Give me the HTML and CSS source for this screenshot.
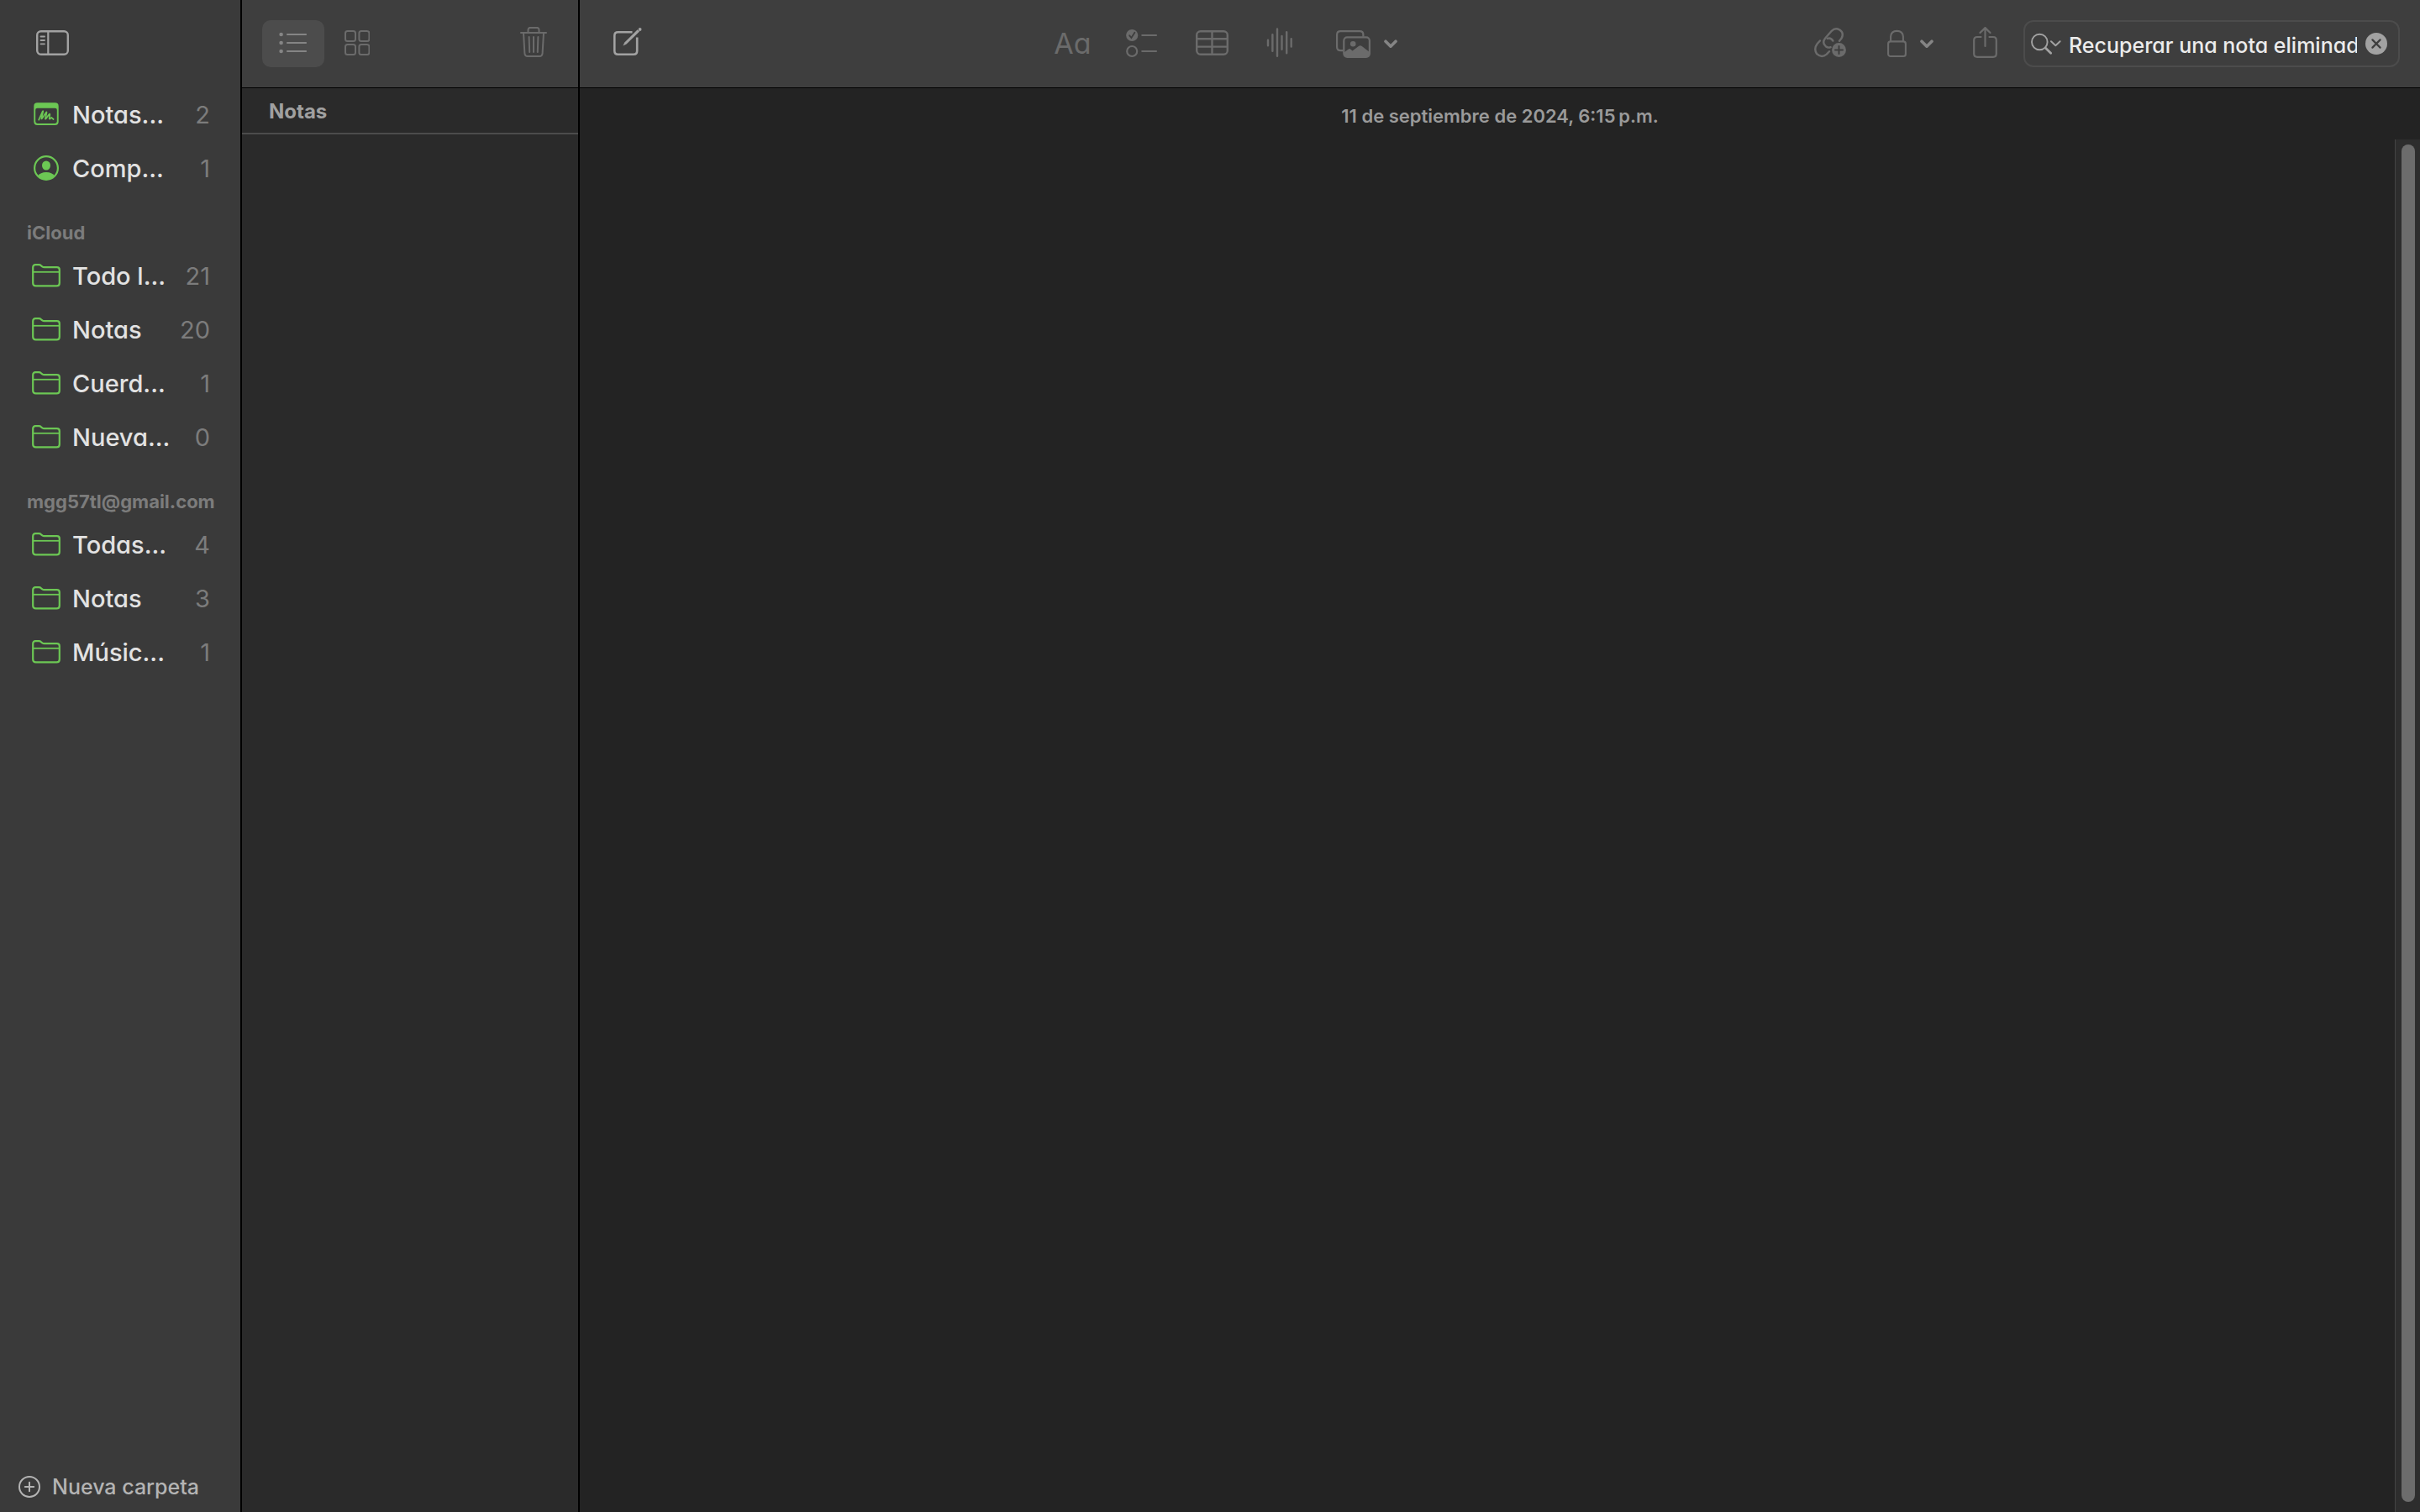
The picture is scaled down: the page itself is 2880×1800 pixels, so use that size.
FILE: index.html
```html
<!DOCTYPE html>
<html lang="es">
<head>
<meta charset="utf-8">
<meta name="viewport" content="width=device-width, initial-scale=1">
<title>Notas</title>
<link rel="stylesheet" href="styles.css">
</head>
<body>
<svg class="defs" aria-hidden="true">
  <symbol id="folder" viewBox="0 0 34 28">
    <path d="M1.2 23V4.2Q1.2 1.2 4.2 1.2H8.2Q9.8 1.2 11 2.3L12.2 3.3Q13.2 4.2 14.8 4.2H29.8Q32.8 4.2 32.8 7.2V23Q32.8 26.4 29.4 26.4H4.6Q1.2 26.4 1.2 23Z" fill="none" stroke="currentColor" stroke-width="2.2"/>
    <path d="M1.2 9.8H32.8" stroke="currentColor" stroke-width="1.8"/>
  </symbol>
  <symbol id="chevron" viewBox="0 0 16 40">
    <path d="M2 17.2L8 23.2L14 17.2" fill="none" stroke="currentColor" stroke-width="3.6" stroke-linecap="round" stroke-linejoin="round"/>
  </symbol>
</svg>
<div class="app">
  <aside class="sidebar">
    <div class="sidebar-top">
      <button class="tool bright" type="button" aria-label="Ocultar carpetas">
        <svg width="39" height="40" viewBox="0 0 39 40" fill="none" stroke="currentColor"><rect x="1.2" y="5.2" width="36.6" height="27.6" rx="4.5" stroke-width="2.4"/><path d="M14.3 5V33" stroke-width="2.2"/><path d="M5.5 11.5H10M5.5 16H10M5.5 20.3H10" stroke-width="1.8" stroke-linecap="round"/></svg>
      </button>
    </div>
    <nav class="folders">
      <a class="row" href="#rapidas"><span class="icon"><svg width="30" height="28" viewBox="0 0 30 28"><path fill="currentColor" fill-rule="evenodd" d="M4.5 0.2H25.5Q29.7 0.2 29.7 4.4V22.8Q29.7 27 25.5 27H4.5Q0.3 27 0.3 22.8V4.4Q0.3 .2 4.5 .2ZM4.4 6.8Q2.2 6.8 2.2 8.8V22.6Q2.2 25 4.6 25H25.4Q27.8 25 27.8 22.6V8.8Q27.8 6.8 25.6 6.8Z"/><path d="M6.2 20.6L10.6 10.8Q11.6 9.2 11 11.8L9.4 18.6Q9.2 20.4 10.4 18.6L14.6 12.2Q16 10.4 15.4 12.6L14 18.8Q13.8 20.6 15.1 18.8L18.3 14.3Q19.7 12.8 19.3 14.8L18.7 18.6Q18.8 20.4 20.1 19L21.2 17.9L23.6 20" fill="none" stroke="currentColor" stroke-width="1.7" stroke-linecap="round" stroke-linejoin="round"/></svg></span><span class="name">Notas...</span><span class="count">2</span></a>
      <a class="row" href="#compartidas"><span class="icon"><svg width="30" height="30" viewBox="0 0 30 30"><circle cx="15" cy="15" r="13.9" fill="none" stroke="currentColor" stroke-width="2.2"/><ellipse cx="15" cy="12" rx="5" ry="5.6" fill="currentColor"/><path d="M5 24.5Q8 20 15 20T25 24.5Q21 29 15 29T5 24.5Z" fill="currentColor"/></svg></span><span class="name">Comp...</span><span class="count">1</span></a>
      <h2 class="section">iCloud</h2>
      <a class="row" href="#todo"><span class="icon"><svg width="34" height="28"><use href="#folder"/></svg></span><span class="name">Todo l...</span><span class="count">21</span></a>
      <a class="row" href="#notas"><span class="icon"><svg width="34" height="28"><use href="#folder"/></svg></span><span class="name">Notas</span><span class="count">20</span></a>
      <a class="row" href="#cuerdas"><span class="icon"><svg width="34" height="28"><use href="#folder"/></svg></span><span class="name">Cuerd...</span><span class="count">1</span></a>
      <a class="row" href="#nueva"><span class="icon"><svg width="34" height="28"><use href="#folder"/></svg></span><span class="name">Nueva...</span><span class="count">0</span></a>
      <h2 class="section">mgg57tl@gmail.com</h2>
      <a class="row" href="#todas"><span class="icon"><svg width="34" height="28"><use href="#folder"/></svg></span><span class="name">Todas...</span><span class="count">4</span></a>
      <a class="row" href="#notas-gmail"><span class="icon"><svg width="34" height="28"><use href="#folder"/></svg></span><span class="name">Notas</span><span class="count">3</span></a>
      <a class="row" href="#musica"><span class="icon"><svg width="34" height="28"><use href="#folder"/></svg></span><span class="name">Músic...</span><span class="count">1</span></a>
    </nav>
    <button class="new-folder" type="button">
      <svg width="26" height="26" viewBox="0 0 26 26" fill="none" stroke="currentColor" stroke-width="2" stroke-linecap="round"><circle cx="13" cy="13" r="12"/><path d="M13 7.8V18.2M7.8 13H18.2"/></svg>
      Nueva carpeta
    </button>
  </aside>

  <section class="list">
    <header class="toolbar list-bar">
      <button class="tool view selected" type="button" aria-label="Lista">
        <svg width="34" height="40" viewBox="0 0 34 40" fill="none" stroke="currentColor" stroke-width="2.2" stroke-linecap="round"><path d="M10 9H32M10 19H32M10 29H32"/><g fill="currentColor" stroke="none"><circle cx="2.6" cy="9" r="2.3"/><circle cx="2.6" cy="19" r="2.3"/><circle cx="2.6" cy="29" r="2.3"/></g></svg>
      </button>
      <button class="tool grid" type="button" aria-label="Galería">
        <svg width="30" height="40" viewBox="0 0 30 40" fill="none" stroke="currentColor" stroke-width="2"><rect x="1" y="5" width="12" height="12" rx="2.5"/><rect x="17.4" y="5" width="12" height="12" rx="2.5"/><rect x="1" y="21" width="12" height="12" rx="2.5"/><rect x="17.4" y="21" width="12" height="12" rx="2.5"/></svg>
      </button>
      <button class="tool trash" type="button" aria-label="Eliminar">
        <svg width="32" height="40" viewBox="0 0 32 40" fill="none" stroke="currentColor" stroke-width="2" stroke-linecap="round"><path d="M1 7H31M9.5 7V3.5Q9.5 0.9 12 .9H20Q22.5 .9 22.5 3.5V7M4 7L5.4 31.5Q5.7 35 8.8 35H23.2Q26.3 35 26.6 31.5L28 7M10.6 12L11.2 30M16 12V30M21.4 12L20.8 30"/></svg>
      </button>
    </header>
    <h1 class="list-title">Notas</h1>
  </section>

  <main class="editor">
    <header class="toolbar editor-bar">
      <button class="tool bright" type="button" aria-label="Nueva nota">
        <svg width="34" height="40" viewBox="0 0 34 40" fill="none" stroke="currentColor"><path d="M22.5 6.2H5.5Q1.3 6.2 1.3 10.4V28.6Q1.3 32.8 5.5 32.8H24Q28.2 32.8 28.2 28.6V12.5" stroke-width="2.6"/><path d="M28.7 3.3L31 5.6L15.5 20.6L11.4 22.6L13.3 18.4Z" fill="currentColor" stroke="none"/><circle cx="31.6" cy="3" r="1.9" fill="currentColor" stroke="none"/></svg>
      </button>
      <div class="tools format">
        <button class="tool text" type="button" aria-label="Formato">Aa</button>
        <button class="tool" type="button" aria-label="Lista de verificación">
          <svg width="38" height="40" viewBox="0 0 38 40" fill="none" stroke="currentColor" stroke-width="2.2" stroke-linecap="round"><path d="M19.3 10H36M19.3 29H36"/><circle cx="7.2" cy="29" r="6"/><circle cx="7.2" cy="10" r="7.1" fill="currentColor" stroke="none"/><path class="cut" d="M4.2 10.3L6.4 12.9L10.4 6.8" stroke-width="1.8"/></svg>
        </button>
        <button class="tool" type="button" aria-label="Tabla">
          <svg width="39" height="40" viewBox="0 0 39 40" fill="none" stroke="currentColor" stroke-width="2.4"><rect x="1.2" y="5.2" width="36.6" height="27.6" rx="4.5"/><path d="M19.5 5V33M1 14.3H38M1 23.6H38"/></svg>
        </button>
        <button class="tool" type="button" aria-label="Audio">
          <svg width="32" height="40" viewBox="0 0 32 40" fill="none" stroke="currentColor" stroke-width="2.4" stroke-linecap="round"><path d="M2 15.8V22.2M7.4 9.2V28.8M13 2.5V34.8M18.5 11V26.8M24.2 6.3V31.2M29.7 14.2V23.6"/></svg>
        </button>
        <span class="pair media">
          <button class="tool" type="button" aria-label="Multimedia">
            <svg width="41" height="40" viewBox="0 0 41 40" fill="none" stroke="currentColor" stroke-width="2.2"><path d="M8.5 28.2H5.6Q1.1 28.2 1.1 24V9.2Q1.1 5.1 5.3 5.1H28.2Q32.4 5.1 32.4 9.2V11.8"/><rect x="9.3" y="12.4" width="30.6" height="23.4" rx="4"/><circle cx="20.2" cy="20.3" r="3.3" fill="currentColor" stroke="none"/><path d="M9.5 30.5L14.8 26.5Q16.2 25.5 17.5 26.7L19.5 28.6L27.2 22.8Q29 21.5 30.8 23L39.8 30V33Q39.8 36 36.5 36H13Q9.5 36 9.5 32.5Z" fill="currentColor" stroke="none"/></svg>
          </button>
          <button class="tool arrow" type="button" aria-label="Opciones multimedia"><svg width="16" height="40"><use href="#chevron"/></svg></button>
        </span>
      </div>
      <div class="tools actions">
        <button class="tool link" type="button" aria-label="Agregar enlace">
          <svg width="38" height="40" viewBox="0 0 38 40" fill="none" stroke="currentColor" stroke-width="2.4" stroke-linecap="round"><path d="M19.6 24.2Q16.6 25.4 13.8 23.2Q9 19 13 13.8L20.8 4.8Q25 .6 30.4 3.6Q36 7.6 32.4 13.8L30 16.8"/><path d="M15.8 13.8Q20 12.5 22.4 16.6"/><path d="M6.9 16.5L3.6 20.2Q-.9 26.2 3.2 32.2Q8.8 37.4 14.8 32.6L18 29.2"/><circle cx="29.5" cy="27.5" r="8.4" fill="currentColor" stroke="none"/><path class="cut" d="M29.5 23V32M25 27.5H34" stroke-width="2"/></svg>
        </button>
        <span class="pair">
          <button class="tool" type="button" aria-label="Bloquear">
            <svg width="23" height="40" viewBox="0 0 23 40" fill="none" stroke="currentColor" stroke-width="2.1"><rect x="1.1" y="17.4" width="20.8" height="17.6" rx="2.8"/><path d="M4.1 17V11.5Q4.5 4.9 11.5 4.9T18.9 11.5V17"/></svg>
          </button>
          <button class="tool arrow" type="button" aria-label="Opciones de bloqueo"><svg width="16" height="40"><use href="#chevron"/></svg></button>
        </span>
        <button class="tool" type="button" aria-label="Compartir">
          <svg width="29" height="40" viewBox="0 0 29 40" fill="none" stroke="currentColor" stroke-width="2.2" stroke-linecap="round" stroke-linejoin="round"><path d="M9.5 12H5Q1.2 12 1.2 15.8V32Q1.2 35.8 5 35.8H24Q27.8 35.8 27.8 32V15.8Q27.8 12 24 12H19.5M14.5 23V1.3M8.5 7L14.5 1.1L20.5 7"/></svg>
        </button>
        <form class="search" role="search">
          <svg width="36" height="26" viewBox="0 0 36 26" fill="none" stroke="currentColor" stroke-linecap="round"><circle cx="10.3" cy="11" r="9.3" stroke-width="1.9"/><path d="M17.2 18L23.6 24.3" stroke-width="2.8"/><path d="M24 10.3L29.3 15.2L34.6 10.3" stroke-width="2" stroke-linejoin="round"/></svg>
          <input type="text" aria-label="Buscar" value="Recuperar una nota eliminada">
          <button class="clear" type="button" aria-label="Borrar búsqueda">
            <svg width="26" height="26" viewBox="0 0 26 26"><circle cx="13" cy="13" r="13" fill="currentColor"/><path class="cut" d="M8.4 8.4L17.6 17.6M17.6 8.4L8.4 17.6" stroke-width="2.2" stroke-linecap="round"/></svg>
          </button>
        </form>
      </div>
    </header>
    <time class="date" datetime="2024-09-11T18:15">11 de septiembre de 2024, 6:15&#8201;p.m.</time>
    <div class="page"><div class="track"><div class="thumb"></div></div></div>
  </main>
</div>
</body>
</html>
```

FILE: styles.css
```css
* { box-sizing: border-box; }

body {
  margin: 0;
  background: #232323;
  color: #e2e2e2;
  font-family: Inter, "Liberation Sans", sans-serif;
}

button, input {
  margin: 0;
  padding: 0;
  border: 0;
  background: none;
  color: inherit;
  font: inherit;
}

svg { display: block; flex: none; }
.defs { position: absolute; width: 0; height: 0; }
.cut { stroke: #3e3e3e; fill: none; }

.app {
  display: grid;
  grid-template-columns: 288px 402px 1fr;
  min-height: 100vh;
}

/* Sidebar */
.sidebar {
  display: flex;
  flex-direction: column;
  border-right: 2px solid #000;
  background: #3a3a3a;
}

.sidebar-top {
  display: flex;
  align-items: center;
  height: 104px;
  padding-left: 43px;
}

.folders { flex: 1; }

.row {
  display: flex;
  align-items: center;
  height: 64px;
  padding: 0 36px 0 38px;
  color: inherit;
  font-size: 29px;
  line-height: 36px;
  text-decoration: none;
}

.icon {
  display: flex;
  justify-content: center;
  width: 34px;
  margin-right: 14px;
  color: #6cc754;
}

.name {
  flex: 1;
  padding-top: 2px;
  font-weight: 500;
  font-feature-settings: "cv11";
  white-space: nowrap;
}

.count {
  padding-top: 2px;
  color: #7c7c7c;
}

.section {
  height: 64px;
  margin: 0;
  padding: 32px 0 0 32px;
  color: #7c7c7c;
  font-size: 22px;
  font-weight: 700;
  line-height: 26px;
}

.new-folder {
  display: flex;
  align-items: center;
  gap: 14px;
  height: 60px;
  padding-left: 22px;
  color: #b4b4b4;
  font-size: 25px;
  font-weight: 500;
}

/* Toolbars */
.toolbar {
  display: flex;
  align-items: center;
  height: 105px;
  border-bottom: 1px solid #000;
  background: #3e3e3e;
}

.tool {
  display: flex;
  align-items: center;
  justify-content: center;
  height: 56px;
  color: #6b6b6b;
}

.bright { color: #a2a2a2; }
.arrow { color: #858585; }

.list {
  border-right: 2px solid #000;
  background: #2a2a2a;
}

.list-bar { padding: 0 37px 0 24px; }
.view { width: 74px; border-radius: 10px; }
.selected { background: #4c4c4c; color: #858585; }
.grid { margin-left: 24px; }
.trash { margin-left: auto; }

.list-title {
  height: 55px;
  margin: 0;
  padding: 13px 32px 10px;
  border-bottom: 2px solid #4c4c4c;
  color: #a0a0a0;
  font-size: 24px;
  font-weight: 700;
  line-height: 30px;
}

/* Editor */
.editor {
  display: flex;
  flex-direction: column;
}

.editor-bar {
  justify-content: space-between;
  padding: 0 24px 0 40px;
}

.tools, .pair { display: flex; align-items: center; }
.pair { gap: 16px; }
.format { gap: 45px; margin-right: 6px; }
.actions { gap: 47px; }
.link { margin-right: 2px; }
.media { margin-left: 6px; }

.text {
  margin-right: -4px;
  padding-bottom: 2px;
  font-size: 34px;
  font-weight: 400;
  font-feature-settings: "cv11";
}

.search {
  display: flex;
  align-items: center;
  width: 448px;
  height: 56px;
  margin-left: -16px;
  padding: 0 13px 0 7px;
  border: 2px solid #4c4c4c;
  border-radius: 12px;
  color: #a2a2a2;
}

.search input {
  flex: 1;
  min-width: 0;
  height: 44px;
  margin: 0 10px 0 9px;
  padding-top: 4px;
  outline: 0;
  color: #ececec;
  font-size: 25px;
  font-weight: 500;
  font-feature-settings: "cv11";
}

.date {
  height: 61px;
  padding-top: 20px;
  color: #9a9a9a;
  font-size: 22px;
  font-weight: 600;
  line-height: 26px;
  text-align: center;
}

.page {
  display: flex;
  flex: 1;
  justify-content: flex-end;
}

.track {
  display: flex;
  width: 30px;
  padding: 6px 6px 12px 7px;
  border-left: 1px solid #444;
  background: #2d2d2d;
}

.thumb {
  flex: 1;
  border-radius: 8px;
  background: #6c6c6c;
}
```
